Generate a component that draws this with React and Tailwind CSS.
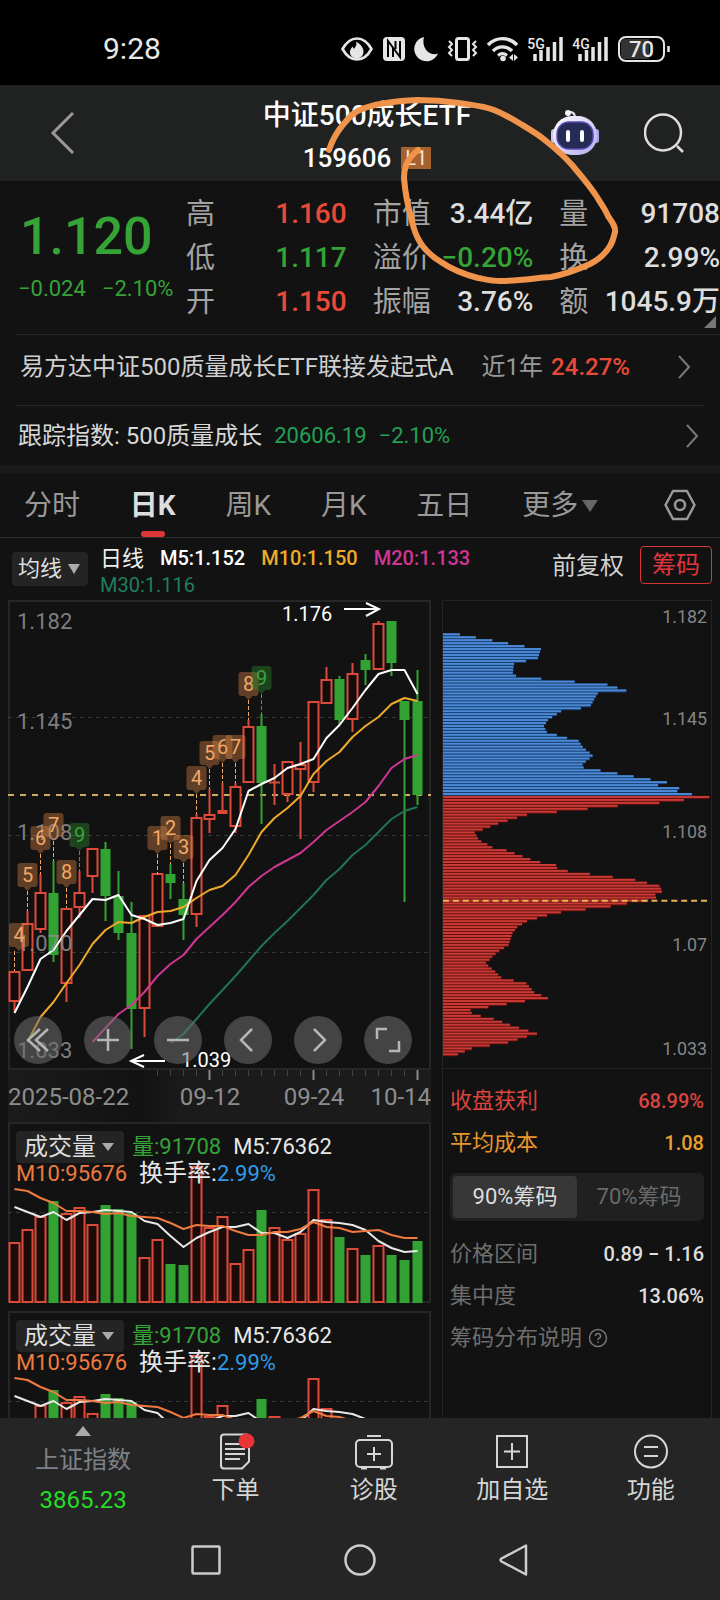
import { useState } from "react";

// one entry per trading day: [isUp, bodyTop, bodyBottom, high, low]
const CANDLES = [
  [1, 371, 402, 371, 412], [1, 323, 371, 311, 371], [1, 292, 330, 274, 333], [0, 293, 355, 261, 362],
  [1, 308, 384, 308, 402], [1, 292, 308, 271, 318], [1, 248, 277, 248, 293], [0, 249, 296, 242, 321],
  [0, 296, 333, 271, 340], [0, 333, 409, 302, 449], [1, 315, 409, 315, 437], [1, 273, 327, 273, 327],
  [0, 274, 283, 264, 299], [0, 299, 315, 283, 340], [1, 217, 315, 214, 327], [1, 214, 220, 189, 233],
  [1, 210, 214, 183, 214], [1, 186, 227, 183, 233], [1, 126, 183, 120, 183], [0, 126, 183, 114, 224],
  [1, 182, 183, 164, 205], [1, 161, 195, 161, 202], [1, 164, 170, 142, 239], [1, 101, 183, 101, 192],
  [1, 79, 104, 67, 104], [0, 79, 120, 76, 124], [1, 73, 120, 63, 132], [0, 60, 70, 54, 85],
  [1, 23, 70, 21, 70], [0, 21, 63, 21, 76], [0, 101, 120, 101, 302], [0, 101, 195, 70, 205],
];

const PRICE_LINES = [
  { color: "#1f7357", start: 12, ys: [443, 434, 419, 404, 390, 376, 361, 346, 333, 321, 308, 295, 280, 269, 255, 245, 232, 219, 211, 207] },
  { color: "#cf3694", start: 6, ys: [442, 428, 414, 405, 392, 376, 364, 355, 339, 327, 315, 302, 287, 276, 267, 260, 253, 242, 230, 221, 212, 202, 186, 168, 159, 155] },
  { color: "#efaa2c", start: 1, ys: [442, 417, 402, 383, 365, 344, 330, 322, 323, 317, 312, 311, 307, 298, 290, 286, 275, 255, 232, 218, 208, 196, 174, 161, 152, 137, 126, 117, 104, 98, 101] },
  { color: "#ffffff", start: 0, ys: [413, 387, 359, 350, 331, 315, 299, 300, 295, 315, 319, 325, 323, 319, 281, 260, 248, 229, 191, 184, 178, 168, 164, 159, 138, 125, 108, 90, 74, 70, 70, 94] },
];

// [day, count, top]
const MARKS = [
  [0, 4, 323], [1, 5, 263], [2, 6, 226], [3, 7, 213], [4, 8, 260], [5, 9, 223], [11, 1, 226], [12, 2, 216],
  [13, 3, 235], [14, 4, 166], [15, 5, 141], [16, 6, 135], [17, 7, 135], [18, 8, 72], [19, 9, 66],
];

const VOLUMES = [
  120, 107, 94, 79, 91, 85, 102, 83, 87, 91, 135, 117, 142, 143, 44, 105,
  94, 141, 127, 88, 105, 117, 111, 67, 97, 115, 126, 133, 123, 133, 138, 119,
];

const VOLUME_LINES = [
  { color: "#e8e8e8", start: 0, ys: [85, 90, 95, 90, 98, 91, 90, 88, 89, 90, 99, 102, 114, 125, 116, 110, 105, 105, 102, 111, 111, 116, 110, 98, 100, 101, 103, 108, 119, 126, 130, 129] },
  { color: "#ee7a40", start: 0, ys: [67, 69, 76, 81, 89, 89, 90, 92, 91, 94, 95, 96, 101, 107, 103, 104, 104, 109, 113, 113, 110, 110, 107, 100, 105, 106, 110, 109, 108, 113, 116, 116] },
];

const CHIPS = [
  72, 120, 170, 218, 267, 317, 314, 311, 308, 272, 236, 234, 233, 232, 242, 318, 419, 518, 548, 575,
  489, 483, 478, 473, 468, 438, 378, 365, 351, 338, 332, 326, 330, 335, 365, 396, 431, 437, 443, 453,
  464, 473, 464, 453, 443, 446, 497, 548, 597, 648, 698, 671, 735, 729, 773, 826, 749, 675, 549, 458,
  365, 275, 245, 216, 188, 164, 141, 117, 122, 127, 137, 155, 170, 213, 237, 261, 285, 315, 363, 366,
  398, 465, 534, 602, 638, 675, 680, 683, 663, 665, 640, 577, 528, 452, 378, 336, 305, 275, 260, 245,
  239, 231, 228, 225, 222, 219, 206, 191, 180, 170, 162, 151, 158, 168, 179, 188, 197, 234, 273, 281,
  289, 297, 318, 338, 269, 213, 158, 104, 108, 135, 174, 200, 224, 251, 279, 305, 275, 246, 218, 162,
  108, 87, 66,
];
const FIRST_RED_CHIP = 55;

const RED = "#dc4b3a";
const GREEN = "#32a332";

const dayX = (i) => 6.5 + i * 13;
const toPoints = (line) => line.ys.map((y, i) => `${dayX(i + line.start)},${y}`).join(" ");

const Lines = ({ lines }) =>
  lines.map((line) => (
    <polyline key={line.color} points={toPoints(line)} fill="none" stroke={line.color} strokeWidth="2" strokeLinejoin="round" />
  ));

const Triangle = ({ className }) => (
  <svg className={className} viewBox="0 0 12 9" preserveAspectRatio="none" aria-hidden="true">
    <path d="M0 0h12L6 9z" fill="currentColor" />
  </svg>
);

const Chevron = () => (
  <svg className="h-6 w-3" viewBox="0 0 12 24" fill="none" stroke="#777" strokeWidth="2" aria-hidden="true">
    <path d="M1 1l10 11L1 23" />
  </svg>
);

const StatusBar = () => (
  <div className="flex h-[85px] shrink-0 items-center justify-between bg-black pt-3 pr-[50px] pl-[103px]">
    <span className="text-[30px] leading-9 text-[#e8e8e8]">9:28</span>
    <svg className="h-7 w-[330px]" viewBox="340 35 330 28" fill="none" stroke="#e6e6e6" aria-hidden="true">
      <path d="M342.500 49C347 41 352 38.500 357 38.500S367 41 371.500 49C367 57 362 59.500 357 59.500S347 57 342.500 49z" strokeWidth="2.600" />
      <path d="M356 41.500c1 3 0 4-1 6-1 2-2 1-2-1-4 3-5 10 3 12 9 0 11-11 0-17z" fill="#e6e6e6" stroke="none" />
      <rect x="383" y="37" width="22" height="24" rx="4" fill="#e6e6e6" stroke="none" />
      <path d="M388 57V41l12 16V41M393 57V48M395.500 41v8" stroke="#000" strokeWidth="2" />
      <path d="M424 37a12.300 12.300 0 1 0 14 16.500c-8 3-17-5-14-16.500z" fill="#e6e6e6" stroke="none" />
      <rect x="456.500" y="38.500" width="12" height="21" rx="2" strokeWidth="3" />
      <path d="M449 41l3 3-3 3 3 3-3 3 3 3M476 41l-3 3 3 3-3 3 3 3-3 3" strokeWidth="2" />
      <path d="M488 45c8-8.500 21-8.500 29 0M493 51c5-5.500 14-5.500 19 0" strokeWidth="3.400" />
      <path d="M498 55.500c3-2.500 6-2.500 9 0" strokeWidth="3" />
      <circle cx="503" cy="58.500" r="2.800" fill="#e6e6e6" stroke="none" />
      <path d="M513 54v7l-4-3.500zM514 54v7l4-3.500z" fill="#e6e6e6" stroke="none" />
      <path d="M535 61v-7M541 61V50M548 61V47M554.500 61V42M561 61V37" strokeWidth="3.500" />
      <path d="M580 61v-7M586.500 61V50M593 61V47M599.500 61V42M606 61V37" strokeWidth="3.500" />
      <rect x="619" y="37" width="45" height="24" rx="7" strokeWidth="2" />
      <path d="M625 39h24v20h-24a4 4 0 0 1-4-4V43a4 4 0 0 1 4-4z" fill="#333" stroke="none" />
      <path d="M668.500 46v6" strokeWidth="2.500" />
      <g fill="#e6e6e6" stroke="none" fontWeight="500" textAnchor="middle">
        <text x="536" y="49" fontSize="14">5G</text>
        <text x="581" y="49" fontSize="14">4G</text>
        <text x="641.500" y="57" fontSize="22">70</text>
      </g>
    </svg>
  </div>
);

const Robot = () => (
  <svg className="h-12 w-12" viewBox="0 0 48 48" aria-hidden="true">
    <defs>
      <linearGradient id="shell" x1="0" y1="0" x2="1" y2="1">
        <stop offset="0" stopColor="#ffffff" />
        <stop offset="1" stopColor="#b3abf0" />
      </linearGradient>
    </defs>
    <path d="M16 4c4-2 8-1 8 5" fill="none" stroke="#e6e6ee" strokeWidth="2" />
    <circle cx="17" cy="4" r="3" fill="#f4f4fa" />
    <rect x="0" y="20" width="6" height="14" rx="3" fill="#c9c6f0" />
    <rect x="42" y="20" width="6" height="14" rx="3" fill="#aaa5e8" />
    <rect x="2" y="7" width="44" height="39" rx="19" fill="url(#shell)" />
    <rect x="6" y="13" width="36" height="27" rx="12" fill="#242c55" stroke="#5a48b0" strokeWidth="1.500" />
    <path d="M17 23v8M31 23v8" stroke="#fff" strokeWidth="4" strokeLinecap="round" />
  </svg>
);

const Header = () => (
  <header className="flex h-24 shrink-0 items-center justify-between bg-[#202221] pr-9 pl-[50px]">
    <div className="flex-1">
      <button aria-label="返回" className="block w-6">
        <svg className="h-11 w-6" viewBox="0 0 24 44" fill="none" stroke="#999" strokeWidth="3">
          <path d="M23 2L3 22l20 20" />
        </svg>
      </button>
    </div>
    <div className="flex flex-col items-center pt-2 font-medium text-white">
      <h1 className="text-[28px] leading-[42px]">中证500成长ETF</h1>
      <div className="flex items-center gap-2.5">
        <span className="text-[26px] leading-[42px]">159606</span>
        <span className="bg-[#a5622f] px-1 text-[20px] leading-[22px] font-normal text-[#f5e6d8]">L1</span>
      </div>
    </div>
    <div className="flex flex-1 items-center justify-end gap-[46px]">
      <button aria-label="智能助手"><Robot /></button>
      <button aria-label="搜索" className="-ml-px">
        <svg className="h-10 w-10" viewBox="0 0 40 40" fill="none" stroke="#ddd" strokeWidth="2.500">
          <circle cx="19" cy="19.500" r="18" />
          <path d="M33 33l6 6" />
        </svg>
      </button>
    </div>
  </header>
);

const STATS = [
  [["高", "1.160", "text-[#e84a3a]"], ["市值", "3.44亿", "text-[#dedede]"], ["量", "91708", "text-[#dedede]"]],
  [["低", "1.117", "text-[#36a336]"], ["溢价", "−0.20%", "text-[#36a336]"], ["换", "2.99%", "text-[#dedede]"]],
  [["开", "1.150", "text-[#e84a3a]"], ["振幅", "3.76%", "text-[#dedede]"], ["额", "1045.9万", "text-[#dedede]"]],
];

const Quote = () => (
  <section className="relative flex h-[153px] shrink-0">
    <div className="w-[186px] shrink-0 pt-6 text-[#36a336]">
      <div className="pl-5 text-[52px] leading-[64px] font-medium">1.120</div>
      <div className="flex gap-4 pt-1 pl-[18px] text-[22px] leading-8">
        <span>−0.024</span>
        <span>−2.10%</span>
      </div>
    </div>
    <dl className="grid flex-1 grid-cols-3 content-start gap-x-[26px] pt-[11px] leading-[44px] whitespace-nowrap">
      {STATS.flat().map(([label, value, color]) => (
        <div key={label} className="flex justify-between">
          <dt className="text-[29px] text-[#a3a3a3]">{label}</dt>
          <dd className={`text-[28px] font-medium ${color}`}>{value}</dd>
        </div>
      ))}
    </dl>
    <svg className="absolute right-1 bottom-1.5 h-3 w-3" viewBox="0 0 12 12" aria-hidden="true">
      <path d="M12 0v12H0z" fill="#777" />
    </svg>
  </section>
);

const TABS = ["分时", "日K", "周K", "月K", "五日"];

const Tabs = () => {
  const [active, setActive] = useState("日K");
  return (
    <nav className="flex h-[65px] shrink-0 items-center justify-between border-b border-[#303030] px-6 text-[28px] text-[#999]">
      {TABS.map((tab) => (
        <button
          key={tab}
          onClick={() => setActive(tab)}
          className={tab === active ? "relative h-full pt-0.5 font-bold text-[#dedede]" : "relative h-full pt-0.5"}
        >
          {tab}
          {tab === active && <span className="absolute bottom-0 left-1/2 h-1.5 w-6 -translate-x-1/2 rounded-[3px] bg-[#dc3636]" />}
        </button>
      ))}
      <button className="flex items-center gap-1 pt-0.5">
        更多
        <Triangle className="h-3 w-4 text-[#666]" />
      </button>
      <button aria-label="设置" className="ml-4">
        <svg className="h-8 w-8" viewBox="0 0 32 32" fill="none" stroke="#999" strokeWidth="2.500" strokeLinejoin="round">
          <path d="M9 2h14l7.500 14L23 30H9L1.500 16z" />
          <circle cx="16" cy="16" r="5" />
        </svg>
      </button>
    </nav>
  );
};

const Legend = () => (
  <div className="flex h-[62px] shrink-0 items-start pr-2 pl-3">
    <label className="relative mt-[14px] flex items-center">
      <select aria-label="指标" className="h-[34px] w-[76px] appearance-none rounded-sm bg-[#242424] pl-1.5 text-[22px] leading-[34px] text-[#dedede]">
        <option>均线</option>
      </select>
      <Triangle className="pointer-events-none absolute right-2 h-2.5 w-3 text-[#aaa]" />
    </label>
    <div className="ml-3 flex flex-1 flex-wrap gap-x-4 pt-[7px] text-[20px] leading-[27px] font-medium">
      <span className="text-[22px] font-normal text-[#eee]">日线</span>
      <span className="text-white">M5:1.152</span>
      <span className="text-[#efaa2c]">M10:1.150</span>
      <span className="text-[#cf3694]">M20:1.133</span>
      <span className="font-normal text-[#1f7f5c]">M30:1.116</span>
    </div>
    <button className="mt-2.5 text-[24px] leading-9 text-[#d0d0d0]">前复权</button>
    <button className="mt-2 ml-4 rounded-sm border border-[#d8343a] px-[11px] text-[24px] leading-[36px] text-[#e0363c]">筹码</button>
  </div>
);

const PRICE_LABELS = [["1.182", 29], ["1.145", 129], ["1.108", 240], ["1.070", 351], ["1.033", 458]];

const PriceChart = () => (
  <svg className="block w-full" viewBox="0 0 423 470" role="img" aria-label="日K线">
    <rect x="1" y="1" width="421" height="468" fill="none" stroke="#262626" strokeWidth="2" />
    {[117, 235, 352].map((y) => (
      <path key={y} d={`M0 ${y}.500H420`} stroke="#383838" strokeDasharray="4 4" />
    ))}
    <path d="M0 195H423" stroke="#d0ab62" strokeWidth="2" strokeDasharray="6 6" />
    {CANDLES.map(([up, top, bottom, high, low], i) => {
      const x = dayX(i);
      if (!up) {
        return (
          <g key={i}>
            <path d={`M${x} ${high}V${low}`} stroke={GREEN} strokeWidth="2" />
            <rect x={x - 5} y={top} width="10" height={bottom - top} fill={GREEN} />
          </g>
        );
      }
      return (
        <g key={i} stroke={RED} strokeWidth="2">
          <path d={`M${x} ${high}V${top}M${x} ${bottom}V${low}`} />
          {bottom - top < 5 ? (
            <rect x={x - 5} y={top} width="10" height={bottom - top} fill={RED} stroke={bottom - top > 1 ? "none" : RED} strokeWidth="1" />
          ) : (
            <rect x={x - 5} y={top + 1} width="10" height={bottom - top - 2} fill="#140c0b" />
          )}
        </g>
      );
    })}
    <Lines lines={PRICE_LINES} />
    <g fill="#8d8d8d" fillOpacity="0.9" fontSize="22">
      {PRICE_LABELS.map(([label, y]) => (
        <text key={label} x="9" y={y}>{label}</text>
      ))}
    </g>
    {MARKS.map(([day, count, top]) => {
      const x = Math.max(dayX(day), 11);
      const color = count === 9 ? "#3fa03f" : "#f3a867";
      return (
        <g key={day}>
          <path d={`M${dayX(day)} ${top + 28}V${top + 48}`} stroke={color} strokeDasharray="4 2" />
          <path
            d={`M${x - 7} ${top}h14q3 0 3 3v18q0 3-3 3h-3l-4 4-4-4h-3q-3 0-3-3v-18q0-3 3-3z`}
            fill={count === 9 ? "#2c922c" : "#e28a48"}
            fillOpacity="0.38"
          />
          <text x={x} y={top + 19} fontSize="20" textAnchor="middle" fill={color}>{count}</text>
        </g>
      );
    })}
    <g fill="#fff" fontSize="20">
      <text x="274" y="21">1.176</text>
      <text x="173" y="467">1.039</text>
    </g>
    <path d="M336 9h34M358 3l13 6-13 7M157 461h-33M136 455l-13 6 13 6" fill="none" stroke="#fff" strokeWidth="2" />
  </svg>
);

const CONTROLS = [
  ["最早", "M26 13L14 24l12 11M34 13L22 24l12 11"],
  ["放大", "M24 13v22M13 24h22"],
  ["缩小", "M13 24h22"],
  ["左移", "M28 13L17 24l11 11"],
  ["右移", "M20 13l11 11-11 11"],
  ["全屏", "M13 23V13h10M25 35h10V25"],
];

const ChartControls = () => (
  <div className="absolute right-[19px] bottom-1.5 left-1.5 flex justify-between">
    {CONTROLS.map(([label, d]) => (
      <button key={label} aria-label={label} className="size-12 rounded-full bg-[#6e6e6e]/55">
        <svg viewBox="0 0 48 48" fill="none" stroke="#b5b5b5" strokeWidth="2.500">
          <path d={d} />
        </svg>
      </button>
    ))}
  </div>
);

const DateAxis = () => (
  <svg className="block w-full" viewBox="0 0 423 52" role="img" aria-label="日期">
    <defs>
      <linearGradient id="fade">
        <stop offset="0" stopColor="#1b1b1b" />
        <stop offset="0.320" stopColor="#121212" />
        <stop offset="0.420" stopColor="#1b1b1b" />
      </linearGradient>
    </defs>
    <rect width="423" height="52" fill="url(#fade)" />
    {CANDLES.map((_, i) => {
      if (i < 11) return null;
      const major = i % 8 === 7;
      return <path key={i} d={`M${dayX(i)} 0v${major ? 10 : 6}`} stroke={major ? "#888" : "#444"} strokeWidth={major ? 2 : 1} />;
    })}
    <g fill="#8d8d8d" fontSize="24">
      <text x="0" y="35">2025-08-22</text>
      <text x="202" y="35" textAnchor="middle">09-12</text>
      <text x="306" y="35" textAnchor="middle">09-24</text>
      <text x="423" y="35" textAnchor="end">10-14</text>
    </g>
  </svg>
);

const VolumePanel = () => (
  <div className="relative">
    <svg className="block w-full" viewBox="0 0 423 181" role="img" aria-label="成交量">
      <rect x="1" y="1" width="421" height="179" fill="none" stroke="#262626" strokeWidth="2" />
      <path d="M0 90.500H420" stroke="#383838" strokeDasharray="4 4" />
      {VOLUMES.map((top, i) => {
        const x = dayX(i) - 5;
        return CANDLES[i][0] ? (
          <rect key={i} x={x} y={top + 1} width="10" height={179 - top} fill="#1c0b09" stroke={RED} strokeWidth="2" />
        ) : (
          <rect key={i} x={x} y={top} width="10" height={181 - top} fill={GREEN} />
        );
      })}
      <Lines lines={VOLUME_LINES} />
    </svg>
    <div className="absolute top-2 left-2 text-[22px] whitespace-nowrap">
      <div className="flex items-center">
        <label className="relative flex items-center">
          <select aria-label="副图指标" className="h-8 w-[108px] appearance-none rounded-sm bg-[#242424] pl-2 text-[24px] leading-8 text-[#dedede]">
            <option>成交量</option>
          </select>
          <Triangle className="pointer-events-none absolute right-2.5 h-2 w-3 text-[#aaa]" />
        </label>
        <span className="ml-2 text-[#36a336]">量:91708</span>
        <span className="ml-3 text-[#e8e8e8]">M5:76362</span>
      </div>
      <div className="-mt-1 flex items-baseline leading-7">
        <span className="text-[#ee7a40]">M10:95676</span>
        <span className="ml-3 text-[24px] text-[#e8e8e8]">换手率:</span>
        <span className="text-[#2f9be8]">2.99%</span>
      </div>
    </div>
  </div>
);

const CHIP_LABELS = [["1.182", 22], ["1.145", 125], ["1.108", 239], ["1.07", 353], ["1.033", 457]];

const ChipChart = () => (
  <svg className="block w-full" viewBox="0 0 270 470" role="img" aria-label="筹码分布">
    {CHIPS.map((value, i) => {
      const width = (value - 21) / 3;
      const y = 32.5 + i * 2.98;
      const red = i >= FIRST_RED_CHIP;
      return (
        <g key={i}>
          <rect x="0" y={y} width={width} height="3" fill={red ? "#641010" : "#163d70"} />
          <rect x="0" y={y} width={width} height="2" fill={red ? "#c93a35" : "#4d8ad6"} />
        </g>
      );
    })}
    <path d="M0 302H268" stroke="#eab454" strokeWidth="2" strokeDasharray="6 4" />
    <g fill="#858585" fontSize="18" textAnchor="end">
      {CHIP_LABELS.map(([label, y]) => (
        <text key={label} x="266" y={y}>{label}</text>
      ))}
    </g>
  </svg>
);

const ChipRow = ({ label, value, labelClass, valueClass }) => (
  <div className="flex items-center justify-between leading-[42px]">
    <dt className={`text-[22px] ${labelClass}`}>{label}</dt>
    <dd className={`text-[20px] font-medium ${valueClass}`}>{value}</dd>
  </div>
);

const ChipPanel = () => (
  <div className="border-x border-t border-[#242424]">
    <div className="border-b border-[#242424]">
      <ChipChart />
    </div>
    <div className="px-[7px] pt-[11px]">
      <dl>
        <ChipRow label="收盘获利" value="68.99%" labelClass="text-[#dc4440]" valueClass="text-[#dc4440]" />
        <ChipRow label="平均成本" value="1.08" labelClass="text-[#e8962a]" valueClass="text-[#e8a02e]" />
      </dl>
      <div className="mt-[9px] mb-3 flex rounded-md bg-[#202020] p-[3px] text-[22px] leading-[42px]">
        <button className="flex-1 rounded-sm bg-[#373737] text-[#dedede]">90%筹码</button>
        <button className="flex-1 text-[#6a6a6a]">70%筹码</button>
      </div>
      <dl>
        <ChipRow label="价格区间" value="0.89 − 1.16" labelClass="text-[#6e6e6e]" valueClass="text-[#dedede]" />
        <ChipRow label="集中度" value="13.06%" labelClass="text-[#6e6e6e]" valueClass="text-[#dedede]" />
      </dl>
      <a href="#chips" className="flex items-center gap-1.5 text-[22px] leading-[42px] text-[#6e6e6e]">
        筹码分布说明
        <svg className="size-5" viewBox="0 0 20 20" fill="none" stroke="#777" strokeWidth="1.500" aria-hidden="true">
          <circle cx="10" cy="10" r="8.500" />
          <path d="M7.500 8a2.500 2.500 0 1 1 3.600 2.200c-.8.400-1.100.800-1.100 1.800M10 13.500v1.500" />
        </svg>
      </a>
    </div>
  </div>
);

const ACTIONS = [
  {
    label: "下单",
    icon: (
      <>
        <path d="M7 1.500h22a3 3 0 0 1 3 3v24l-7 7H7a3 3 0 0 1-3-3v-28a3 3 0 0 1 3-3z" />
        <path d="M8 11h17M8 16h20M8 21h20M8 26h15" />
        <ellipse cx="29.500" cy="8" rx="8" ry="7.500" fill="#e83434" stroke="none" />
      </>
    ),
  },
  {
    label: "诊股",
    icon: (
      <>
        <rect x="0" y="7" width="36" height="27" rx="4" />
        <path d="M18 14v14M11 21h14M11 3h14M5 35.500h6M24 35.500h6" />
      </>
    ),
  },
  {
    label: "加自选",
    icon: (
      <>
        <rect x="3" y="3" width="30" height="31" />
        <path d="M18 10v17M10 18.500h16" />
      </>
    ),
  },
  {
    label: "功能",
    icon: (
      <>
        <circle cx="18" cy="18.500" r="16" />
        <path d="M11 14h14M11 23h14" />
      </>
    ),
  },
];

const BottomBar = () => (
  <footer className="shrink-0 bg-[#252525]">
    <div className="flex h-[101px]">
      <button className="flex flex-[6] flex-col items-center pt-2 text-[24px] leading-8 text-[#7d8288]">
        <svg className="h-2.5 w-4" viewBox="0 0 16 10" aria-hidden="true">
          <path d="M8 0l8 10H0z" fill="#aaa" />
        </svg>
        <span className="pt-2">上证指数</span>
        <span className="pt-2 text-[#26dd26]">3865.23</span>
      </button>
      {ACTIONS.map(({ label, icon }) => (
        <button key={label} className="flex flex-[5] flex-col items-center pt-[15px] text-[24px] leading-[38px] text-[#d6d6d6]">
          <svg className="h-[38px] w-9 overflow-visible" viewBox="0 0 36 38" fill="none" stroke="#d6d6d6" strokeWidth="2" aria-hidden="true">
            {icon}
          </svg>
          {label}
        </button>
      ))}
    </div>
    <div className="flex h-[81px] items-center justify-center gap-[122px]">
      {[
        ["最近任务", <rect x="2.500" y="2.500" width="27" height="27" rx="1" />],
        ["主屏幕", <circle cx="16" cy="16" r="14.500" />],
        ["后退", <path d="M28 1.500v29L3.500 17.500q-2-1.500 0-3z" strokeLinejoin="round" />],
      ].map(([label, shape]) => (
        <button key={label} aria-label={label}>
          <svg className="size-8" viewBox="0 0 32 32" fill="none" stroke="#ccc" strokeWidth="2.500">{shape}</svg>
        </button>
      ))}
    </div>
  </footer>
);

// hand drawn circle that runs over the header and the quote
const Scribble = () => (
  <svg className="pointer-events-none absolute top-[90px] left-1/2 h-[200px] w-[320px] -translate-x-[40px]" viewBox="320 90 320 200" fill="none" aria-hidden="true">
    <path
      d="M329 150C333 138 337 132 342 126C348 119 352 113 360 110C375 103 395 101 418 100C433 100 445 101 459 103C472 105 484 106 494 110C504 114 511 118 519 123C529 129 538 134 546 141C556 149 564 156 572 165C583 178 590 186 597 197C601 204 605 209 608 216C612 222 616 227 615 232C613 240 612 244 608 249C603 256 598 260 590 264C577 270 566 274 551 277C535 278 520 281 500 281C491 281 484 279 478 278C463 274 451 269 441 262C431 256 425 250 420 242C414 233 413 225 411 217C407 203 405 190 404 178C404 172 405 168 406 165C409 158 413 154 418 150"
      stroke="#f0944c"
      strokeWidth="6"
      strokeLinecap="round"
      strokeLinejoin="round"
    />
  </svg>
);

export default function App() {
  return (
    <div className="relative flex h-screen flex-col overflow-hidden bg-[#121212] font-['Roboto','Noto_Sans_CJK_SC',sans-serif]">
      <StatusBar />
      <Header />
      <Quote />
      <a href="#fund" className="ml-4 flex h-[71px] shrink-0 items-center border-t border-[#272727] pr-[30px] pb-1.5 pl-1 text-[24px] text-[#d0d0d0]">
        易方达中证500质量成长ETF联接发起式A
        <span className="ml-7 text-[#999]">近1年</span>
        <span className="ml-2 font-medium text-[#e84a3a]">24.27%</span>
        <span className="ml-auto"><Chevron /></span>
      </a>
      <a href="#index" className="mx-4 flex h-[60px] shrink-0 items-center border-t border-[#272727] pr-1.5 pl-0.5 text-[24px] text-[#d8d8d8]">
        跟踪指数: 500质量成长
        <span className="ml-3 text-[22px] text-[#22a055]">20606.19</span>
        <span className="ml-3 text-[22px] text-[#22a055]">−2.10%</span>
        <span className="ml-auto"><Chevron /></span>
      </a>
      <div className="h-2 shrink-0 bg-[#191919]" />
      <Tabs />
      <Legend />
      <main className="grid min-h-0 flex-1 grid-cols-[423fr_270fr] gap-[11px] overflow-hidden px-2">
        <div>
          <div className="relative">
            <PriceChart />
            <ChartControls />
          </div>
          <DateAxis />
          <VolumePanel />
          <div className="mt-2">
            <VolumePanel />
          </div>
        </div>
        <ChipPanel />
      </main>
      <BottomBar />
      <Scribble />
    </div>
  );
}
